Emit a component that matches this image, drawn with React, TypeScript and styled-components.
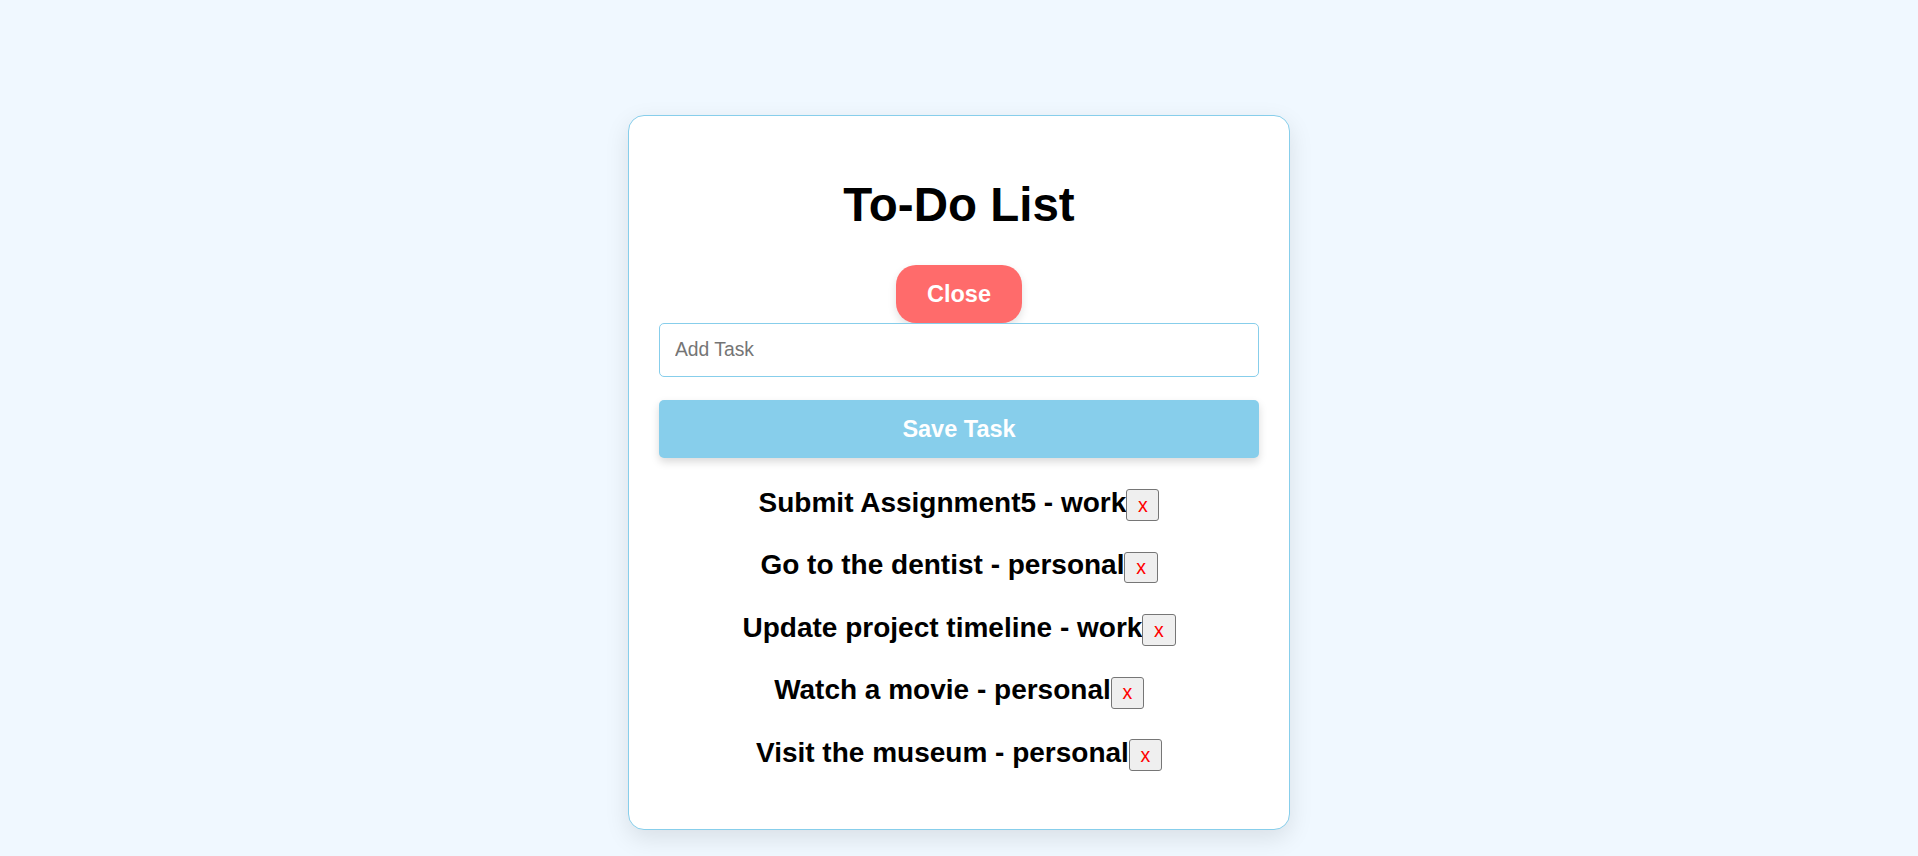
import React, { useState } from "react";
import styled, { createGlobalStyle } from "styled-components";

const GlobalStyle = createGlobalStyle`
  html, body {
    margin: 0;
    padding: 0;
    background: #f0f8ff;
    font-family: "Liberation Sans", Arial, sans-serif;
  }
  * { box-sizing: border-box; }
`;

const Page = styled.div`
  min-height: 856px;
  display: flex;
  flex-direction: column;
  align-items: center;
  padding-top: 115px;
`;

const Card = styled.div`
  width: 662px;
  background: #ffffff;
  border: 1px solid #87ceeb;
  border-radius: 16px;
  box-shadow: 0 8px 24px rgba(0, 0, 0, 0.1);
  padding: 30px 30px;
  display: flex;
  flex-direction: column;
  align-items: stretch;
`;

const Title = styled.h1`
  margin: 32px 0 33px;
  font-size: 47.5px;
  line-height: 54px;
  font-weight: 700;
  text-align: center;
  color: #000;
`;

const CloseButton = styled.button`
  align-self: center;
  width: 126px;
  height: 58px;
  border: none;
  border-radius: 20px;
  background: #ff6b6b;
  color: #fff;
  font-family: inherit;
  font-size: 23.5px;
  font-weight: 700;
  box-shadow: 0 4px 8px rgba(0, 0, 0, 0.12);
  cursor: pointer;
`;

const TaskInput = styled.input`
  margin-top: 0;
  width: 100%;
  height: 54px;
  border: 1px solid #87ceeb;
  border-radius: 5px;
  padding: 0 15px;
  font-family: inherit;
  font-size: 19.3px;
  color: #000;
  outline: none;
  &::placeholder { color: #757575; }
`;

const SaveButton = styled.button`
  margin-top: 23px;
  width: 100%;
  height: 58px;
  border: none;
  border-radius: 5px;
  background: #87ceeb;
  color: #fff;
  font-family: inherit;
  font-size: 23.5px;
  font-weight: 700;
  box-shadow: 0 4px 8px rgba(0, 0, 0, 0.15);
  cursor: pointer;
`;

const TaskList = styled.div`
  margin: 28.5px 0 28px;
  display: flex;
  flex-direction: column;
  gap: 28.2px;
`;

const TaskRow = styled.div`
  text-align: center;
  font-size: 28px;
  font-weight: 700;
  color: #000;
`;

const DeleteButton = styled.button`
  font-family: inherit;
  font-size: 19.5px;
  font-weight: 400;
  color: #ff0000;
  background: #efefef;
  border: 1px solid #767676;
  border-radius: 3px;
  padding: 3.4px 10.7px;
  vertical-align: baseline;
  cursor: pointer;
`;

type Task = { title: string; category: string };

const initialTasks: Task[] = [
  { title: "Submit Assignment5", category: "work" },
  { title: "Go to the dentist", category: "personal" },
  { title: "Update project timeline", category: "work" },
  { title: "Watch a movie", category: "personal" },
  { title: "Visit the museum", category: "personal" },
];

export default function App() {
  const [tasks, setTasks] = useState<Task[]>(initialTasks);
  const [value, setValue] = useState("");

  return (
    <>
      <GlobalStyle />
      <Page>
        <Card>
          <Title>To-Do List</Title>
          <CloseButton>Close</CloseButton>
          <TaskInput
            placeholder="Add Task"
            value={value}
            onChange={(e) => setValue(e.target.value)}
          />
          <SaveButton
            onClick={() => {
              if (value.trim()) {
                setTasks([...tasks, { title: value.trim(), category: "personal" }]);
                setValue("");
              }
            }}
          >
            Save Task
          </SaveButton>
          <TaskList>
            {tasks.map((t, i) => (
              <TaskRow key={i}>
                {t.title} - {t.category}
                <DeleteButton onClick={() => setTasks(tasks.filter((_, j) => j !== i))}>
                  x
                </DeleteButton>
              </TaskRow>
            ))}
          </TaskList>
        </Card>
      </Page>
    </>
  );
}
